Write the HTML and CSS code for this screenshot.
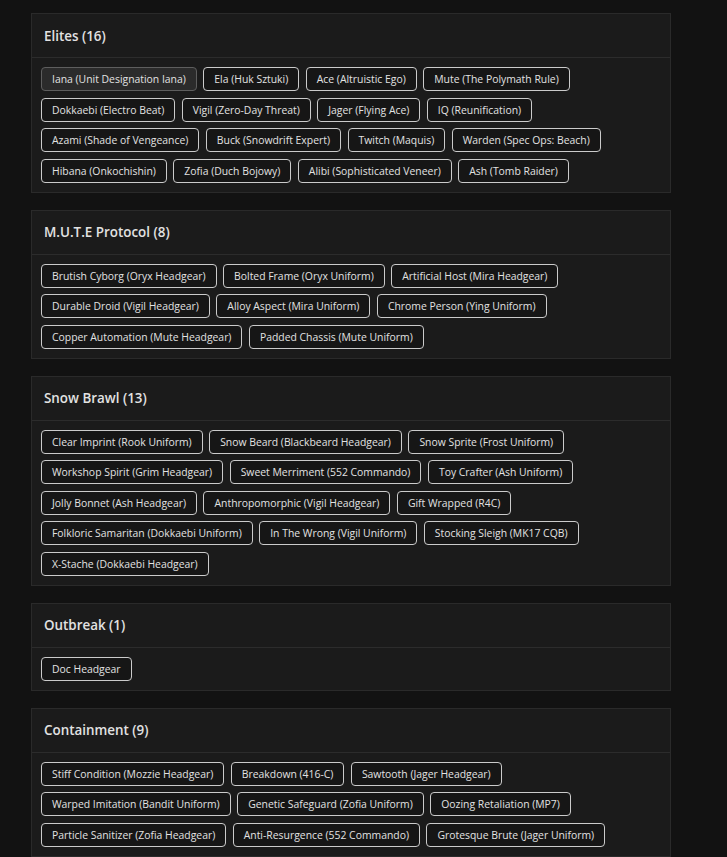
FILE: index.html
```html
<!DOCTYPE html>
<html>
<head>
<meta charset="utf-8">
<link rel="stylesheet" href="styles.css">
</head>
<body>
<main class="page">
  <section class="card">
    <h2 class="card-title">Elites (16)</h2>
    <div class="chips">
      <span class="chip chip-active">Iana (Unit Designation Iana)</span>
      <span class="chip">Ela (Huk Sztuki)</span>
      <span class="chip">Ace (Altruistic Ego)</span>
      <span class="chip">Mute (The Polymath Rule)</span>
      <span class="chip">Dokkaebi (Electro Beat)</span>
      <span class="chip">Vigil (Zero-Day Threat)</span>
      <span class="chip">Jager (Flying Ace)</span>
      <span class="chip">IQ (Reunification)</span>
      <span class="chip">Azami (Shade of Vengeance)</span>
      <span class="chip">Buck (Snowdrift Expert)</span>
      <span class="chip">Twitch (Maquis)</span>
      <span class="chip">Warden (Spec Ops: Beach)</span>
      <span class="chip">Hibana (Onkochishin)</span>
      <span class="chip">Zofia (Duch Bojowy)</span>
      <span class="chip">Alibi (Sophisticated Veneer)</span>
      <span class="chip">Ash (Tomb Raider)</span>
    </div>
  </section>
  <section class="card">
    <h2 class="card-title">M.U.T.E Protocol (8)</h2>
    <div class="chips">
      <span class="chip">Brutish Cyborg (Oryx Headgear)</span>
      <span class="chip">Bolted Frame (Oryx Uniform)</span>
      <span class="chip">Artificial Host (Mira Headgear)</span>
      <span class="chip">Durable Droid (Vigil Headgear)</span>
      <span class="chip">Alloy Aspect (Mira Uniform)</span>
      <span class="chip">Chrome Person (Ying Uniform)</span>
      <span class="chip">Copper Automation (Mute Headgear)</span>
      <span class="chip">Padded Chassis (Mute Uniform)</span>
    </div>
  </section>
  <section class="card">
    <h2 class="card-title">Snow Brawl (13)</h2>
    <div class="chips">
      <span class="chip">Clear Imprint (Rook Uniform)</span>
      <span class="chip">Snow Beard (Blackbeard Headgear)</span>
      <span class="chip">Snow Sprite (Frost Uniform)</span>
      <span class="chip">Workshop Spirit (Grim Headgear)</span>
      <span class="chip">Sweet Merriment (552 Commando)</span>
      <span class="chip">Toy Crafter (Ash Uniform)</span>
      <span class="chip">Jolly Bonnet (Ash Headgear)</span>
      <span class="chip">Anthropomorphic (Vigil Headgear)</span>
      <span class="chip">Gift Wrapped (R4C)</span>
      <span class="chip">Folkloric Samaritan (Dokkaebi Uniform)</span>
      <span class="chip">In The Wrong (Vigil Uniform)</span>
      <span class="chip">Stocking Sleigh (MK17 CQB)</span>
      <span class="chip">X-Stache (Dokkaebi Headgear)</span>
    </div>
  </section>
  <section class="card">
    <h2 class="card-title">Outbreak (1)</h2>
    <div class="chips">
      <span class="chip">Doc Headgear</span>
    </div>
  </section>
  <section class="card">
    <h2 class="card-title">Containment (9)</h2>
    <div class="chips">
      <span class="chip">Stiff Condition (Mozzie Headgear)</span>
      <span class="chip">Breakdown (416-C)</span>
      <span class="chip">Sawtooth (Jager Headgear)</span>
      <span class="chip">Warped Imitation (Bandit Uniform)</span>
      <span class="chip">Genetic Safeguard (Zofia Uniform)</span>
      <span class="chip">Oozing Retaliation (MP7)</span>
      <span class="chip">Particle Sanitizer (Zofia Headgear)</span>
      <span class="chip">Anti-Resurgence (552 Commando)</span>
      <span class="chip">Grotesque Brute (Jager Uniform)</span>
    </div>
  </section>
</main>
</body>
</html>
```

FILE: styles.css
```css
html, body {
  margin: 0;
  padding: 0;
  background: #121212;
}

body {
  font-family: "Open Sans", "Noto Sans", sans-serif;
  color: #dcdcdc;
}

.page {
  padding: 13px 0 0 31px;
  width: 640px;
  display: flex;
  flex-direction: column;
  gap: 17px;
}

.card {
  background: #1b1b1b;
  border: 1px solid #2a2a2a;
}

.card-title {
  margin: 0;
  height: 43px;
  display: flex;
  align-items: center;
  padding-left: 12px;
  font-size: 13.4px;
  font-weight: 600;
  color: #e2e2e2;
  border-bottom: 1px solid #2c2c2c;
}

.chips {
  display: flex;
  flex-wrap: wrap;
  gap: 6.5px 6.5px;
  padding: 9px 9px 9px 9px;
}

.chip {
  box-sizing: border-box;
  height: 24px;
  display: inline-flex;
  align-items: center;
  padding: 0 10px;
  border: 1px solid #cbcbcb;
  border-radius: 4px;
  background: #161616;
  font-size: 10.4px;
  color: #e2e2e2;
  white-space: nowrap;
}

.chip-active {
  background: #2b2b2b;
  border-color: #5e5e5e;
}
```
